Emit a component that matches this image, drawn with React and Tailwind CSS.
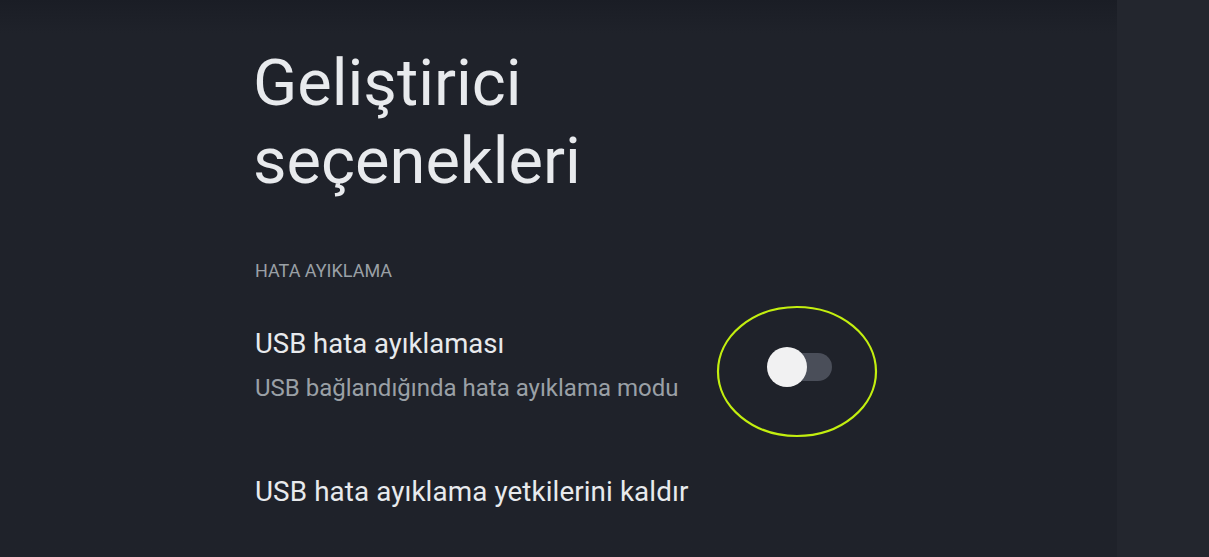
import React, { useState } from 'react';

// Developer options screen (TV settings style) with highlighted USB debugging toggle
function Toggle({ on, onChange }) {
  return (
    <button
      onClick={() => onChange(!on)}
      aria-label="USB hata ayıklaması"
      className="relative w-[66px] h-[40px] flex items-center"
    >
      <span className="ml-[18px] w-[47px] h-[28px] rounded-full bg-[#4a4e59]" />
      <span className="absolute left-0 top-0 w-[40px] h-[40px] rounded-full bg-[#f1f1f2]" />
    </button>
  );
}

export default function App() {
  const [usbDebug, setUsbDebug] = useState(false);

  return (
    <div
      className="w-[1209px] h-[557px] overflow-hidden flex bg-[#1f222a] text-[#e8eaed]"
      style={{ fontFamily: 'Roboto, "Liberation Sans", sans-serif' }}
    >
      <main className="relative flex-1 bg-gradient-to-b from-[#1a1d25] via-[#1f222a] via-[6%] to-[#1f222a]">
        <div className="pl-[255px] pt-[44px]">
          <h1 className="text-[65px] leading-[78px] font-normal text-[#e8eaed] -ml-[2px]">
            Geliştirici
            <br />
            seçenekleri
          </h1>

          <div className="mt-[60px] text-[18px] leading-[22px] text-[#9aa0a6] uppercase">
            Hata ayıklama
          </div>

          <div className="mt-[45px] flex items-center">
            <div className="w-[512px]">
              <div className="text-[27.5px] leading-[34px] text-[#e8eaed]">USB hata ayıklaması</div>
              <div className="mt-[12px] text-[24px] leading-[30px] text-[#9aa0a6]">
                USB bağlandığında hata ayıklama modu
              </div>
            </div>
            <div className="mt-[4px]">
              <Toggle on={usbDebug} onChange={setUsbDebug} />
            </div>
          </div>

          <div className="mt-[72px] text-[27.8px] leading-[34px] text-[#e8eaed] tracking-[0.1px]">
            USB hata ayıklama yetkilerini kaldır
          </div>
        </div>

        {/* highlight ring around the toggle */}
        <svg className="absolute left-[716px] top-[305px] pointer-events-none" width="162" height="133" viewBox="0 0 162 133">
          <ellipse cx="81" cy="66.5" rx="79" ry="64.5" fill="none" stroke="#c3ef0f" strokeWidth="2.2" />
        </svg>
      </main>

      <aside className="w-[92px] bg-[#23262e]" />
    </div>
  );
}
